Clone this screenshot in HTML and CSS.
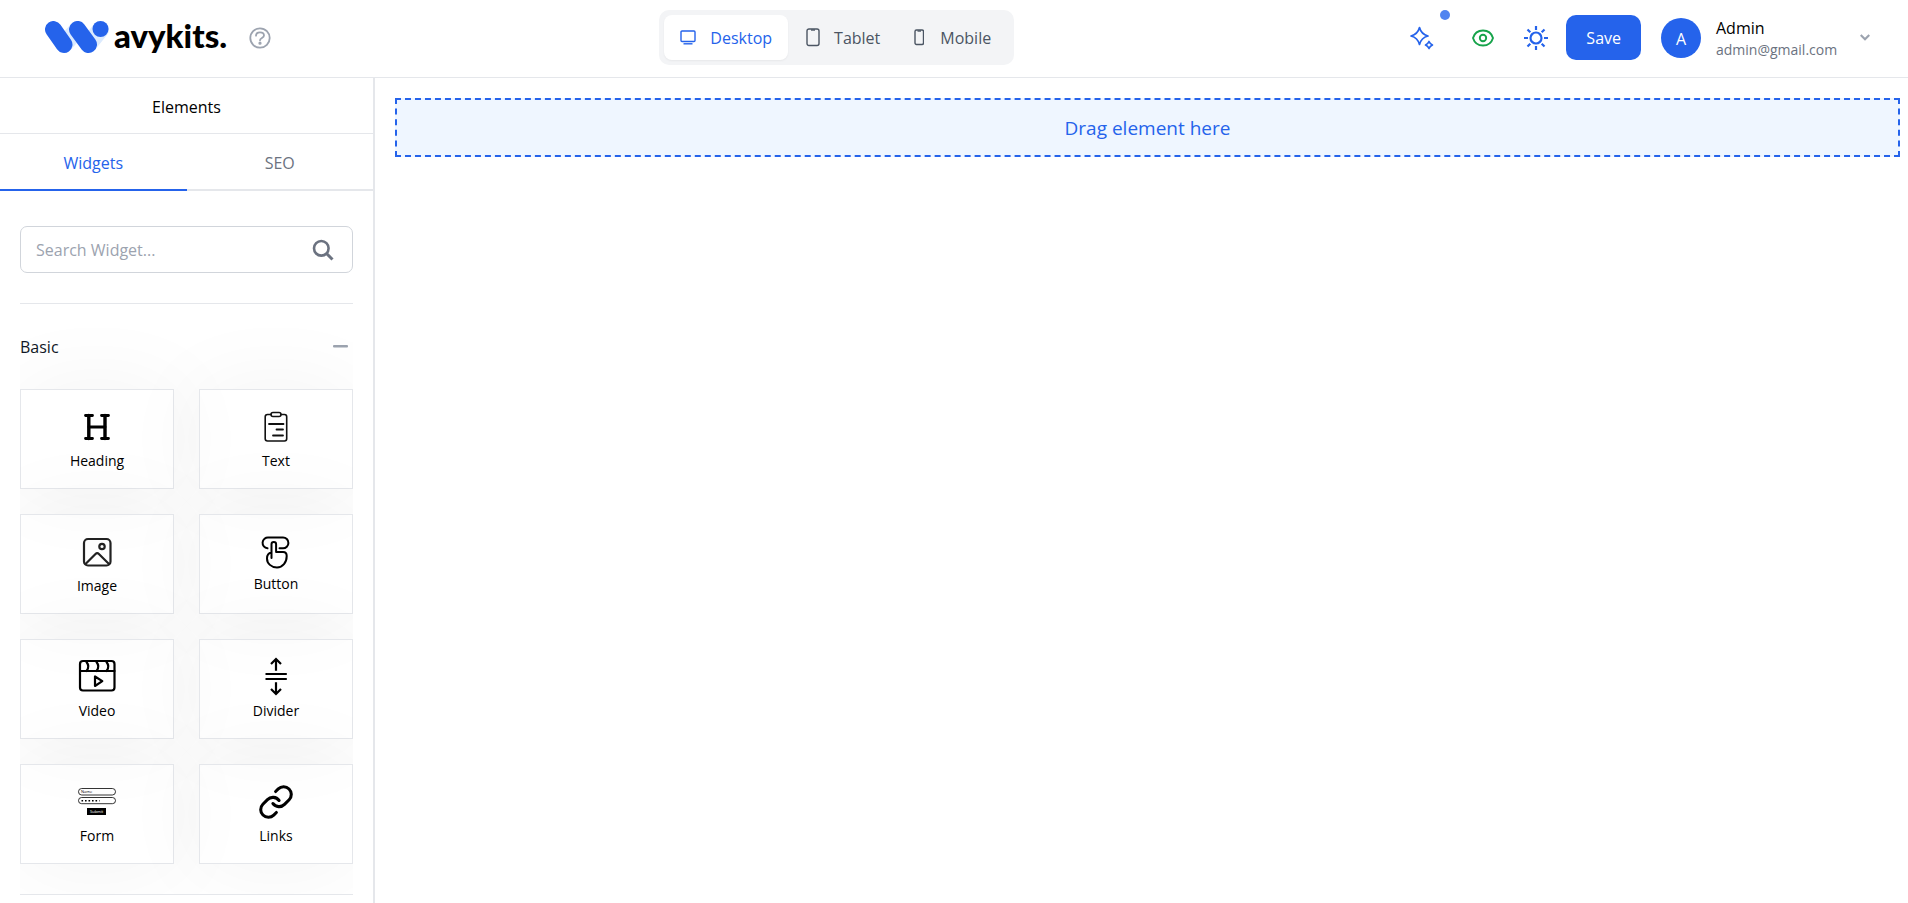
FILE: index.html
```
<!DOCTYPE html>
<html lang="en">
<head>
  <meta charset="UTF-8" />
  <meta name="viewport" content="width=device-width, initial-scale=1.0" />
  <title>Wavykits</title>
  <link rel="stylesheet" href="styles.css">
</head>
<body>
  <header class="header">
    <div class="brand">
      <a class="logo" href="#" aria-label="Wavykits">
        <svg width="64" height="33" viewBox="0 0 64 33" fill="none" stroke-linecap="round" stroke-width="17">
          <path stroke="#dbeafe" d="M19 23.5 32.5 8.5M43.5 23.5 55.5 8.5" />
          <path stroke="#2563eb" d="M8.5 8.5 19 23.5M32.5 8.5 43.5 23.5" />
          <circle cx="55.5" cy="8" r="8" fill="#2563eb" />
        </svg>
        <span class="logo-text">avykits.</span>
      </a>
      <button class="icon-btn help" aria-label="Help">
        <svg width="22" height="22" viewBox="0 0 22 22" fill="none" stroke="currentColor" stroke-width="1.8" stroke-linecap="round">
          <circle cx="11" cy="11" r="9.7" />
          <path d="M7 8.700C7 6.500 8.800 5.300 11 5.300s4 1.300 4 3.300c0 2.400-4 2.400-4 4.600" />
          <circle cx="11" cy="16.2" r=".7" fill="currentColor" />
        </svg>
      </button>
    </div>

    <div class="devices">
      <button class="device active">
        <svg width="16" height="20" viewBox="0 0 16 20" fill="none" stroke="currentColor" stroke-width="1.4">
          <rect x="1" y="3" width="14" height="10.5" rx="1" />
          <path d="M3.500 15.800h9" />
        </svg>
        Desktop
      </button>
      <button class="device">
        <svg width="14" height="20" viewBox="0 0 14 20" fill="none" stroke="currentColor" stroke-width="1.4">
          <rect x="1" y="1" width="12" height="16.5" rx="2" />
          <path d="M5 2h4" />
        </svg>
        Tablet
      </button>
      <button class="device mobile">
        <svg width="10" height="20" viewBox="0 0 10 20" fill="none" stroke="currentColor" stroke-width="1.4">
          <rect x="1" y="2" width="8.5" height="14.5" rx="1.5" />
          <path d="M3.500 3h3.500" />
        </svg>
        Mobile
      </button>
    </div>

    <div class="actions">
      <button class="icon-btn ai" aria-label="AI assistant">
        <svg width="24" height="24" viewBox="0 0 24 24" fill="none" stroke="currentColor" stroke-width="1.7" stroke-linejoin="round">
          <path d="M9.500 1.500Q11.200 8.200 18 10 11.200 11.800 9.500 18.500 7.800 11.800 1 10 7.800 8.200 9.500 1.500z" />
          <path d="M19 15.500q1 2.500 3.500 3.500-2.500 1-3.500 3.500-1-2.500-3.500-3.500 2.500-1 3.500-3.500z" />
        </svg>
        <span class="dot"></span>
      </button>
      <button class="icon-btn preview" aria-label="Preview">
        <svg width="22" height="20" viewBox="0 0 22 20" fill="none" stroke="currentColor" stroke-width="1.9">
          <path d="M1 10C2.500 5 6.500 2.500 11 2.500S19.500 5 21 10c-1.500 5-5.500 7.500-10 7.500S2.500 15 1 10z" />
          <circle cx="11" cy="10" r="3.2" />
        </svg>
      </button>
      <button class="icon-btn theme" aria-label="Toggle theme">
        <svg width="26" height="26" viewBox="0 0 26 26" fill="none" stroke="currentColor" stroke-width="2.2">
          <circle cx="13" cy="13" r="5.5" />
          <path d="M13 1v4M13 21v4M1 13h4M21 13h4M4.500 4.500l2.800 2.800M18.700 18.700l2.800 2.800M4.500 21.500l2.800-2.800M18.700 7.300l2.800-2.800" />
        </svg>
      </button>
      <button class="save">Save</button>
      <button class="user">
        <span class="avatar">A</span>
        <span class="user-info">
          <span class="user-name">Admin</span>
          <span class="user-mail">admin@gmail.com</span>
        </span>
        <svg width="10" height="8" viewBox="0 0 10 8" fill="none" stroke="#9ca3af" stroke-width="2.2">
          <path d="M.7 1 5 5.300 9.300 1" />
        </svg>
      </button>
    </div>
  </header>

  <div class="layout">
    <aside class="sidebar">
      <h2 class="sidebar-title">Elements</h2>
      <div class="tabs">
        <button class="tab active">Widgets</button>
        <button class="tab">SEO</button>
      </div>

      <div class="panel">
        <div class="search">
          <input type="text" id="search" placeholder="Search Widget..." aria-label="Search Widget" />
          <svg width="22" height="22" viewBox="0 0 22 22" fill="none" stroke="#6b7280" stroke-width="2.6">
            <circle cx="9.3" cy="9.3" r="7.3" />
            <path d="M14.500 14.500l6 6" stroke-width="3" />
          </svg>
        </div>

        <section class="group">
          <button class="group-head">
            Basic
            <svg width="16" height="6" viewBox="0 0 16 6"><rect y="1" width="15" height="2.5" rx="1" fill="#9ca3af" /></svg>
          </button>
          <div class="widgets">
            <div class="widget" draggable="true">
              <svg width="40" height="40" viewBox="0 0 40 40" fill="none" stroke="#000" stroke-linecap="round">
                <path stroke-width="3.4" d="M11.800 8.500v23M28 8.500v23" />
                <path stroke-width="2.8" d="M12 20h16M8.500 8.500h7M24.500 8.500h7M8.500 31.500h7M24.500 31.500h7" />
              </svg>
              <span>Heading</span>
            </div>
            <div class="widget" draggable="true">
              <svg width="40" height="40" viewBox="0 0 40 40" fill="none" stroke="#111" stroke-width="1.6" stroke-linecap="round">
                <path d="M15 7.500h-3.500q-2.300 0-2.300 2.300v22q0 2.200 2.300 2.200h17q2.200 0 2.200-2.200v-22q0-2.300-2.200-2.300H25" />
                <rect x="15" y="5.5" width="10" height="4" rx="2" />
                <path stroke-width="1.8" d="M13 17h14.500M20.500 22.500h6.500M17 28.500h10" />
              </svg>
              <span>Text</span>
            </div>
            <div class="widget" draggable="true">
              <svg width="40" height="40" viewBox="0 0 40 40" fill="none" stroke="#222" stroke-width="2.2" stroke-linejoin="round">
                <rect x="7" y="7" width="26.5" height="26.5" rx="4" />
                <circle cx="25" cy="14.5" r="2.7" />
                <path d="M8 32.500l10.500-10.500q1.700-1.700 3.400 0l10.600 10.500" />
              </svg>
              <span>Image</span>
            </div>
            <div class="widget" draggable="true">
              <svg width="36" height="36" viewBox="0 0 36 36" fill="none" stroke="#000" stroke-width="2" stroke-linecap="round" stroke-linejoin="round">
                <path d="M9.500 14.300A5.400 5.400 0 0 1 10.500 3.500H25a5.400 5.400 0 0 1 0 10.800h-3.500" />
                <path d="M13.500 24V10.300a2.300 2.300 0 0 1 4.600 0V18h7q3.600 0 3.600 4c0 6.500-4 11.500-9.700 11.500S9 29.500 9 24.500c0-3.500 1.500-5.500 4.500-6" />
              </svg>
              <span>Button</span>
            </div>
            <div class="widget" draggable="true">
              <svg width="40" height="40" viewBox="0 0 40 40" fill="none" stroke="#000" stroke-width="2.2" stroke-linecap="round" stroke-linejoin="round">
                <rect x="3" y="4" width="34.5" height="29.5" rx="3" />
                <path d="M3 14h34.500M9.500 5q3.600 4.500 0 9M19.500 5q3.600 4.500 0 9M29.500 5q3.600 4.500 0 9M18 19.500v9.500l7.300-4.800z" />
              </svg>
              <span>Video</span>
            </div>
            <div class="widget" draggable="true">
              <svg width="40" height="40" viewBox="0 0 40 40" fill="none" stroke="#000" stroke-width="2.2">
                <path d="M20 13.700V2M15 7l5-5 5 5M9.500 17h21.300M9.500 22h21.300M20 25.300V37M15 32l5 5 5-5" />
              </svg>
              <span>Divider</span>
            </div>
            <div class="widget" draggable="true">
              <svg width="40" height="40" viewBox="0 0 40 40" fill="none" stroke="#000">
                <rect x="1.5" y="6.5" width="37" height="6.5" rx="3.2" stroke-width=".8" />
                <rect x="1.5" y="15.5" width="37" height="6.2" rx="3.1" stroke-width=".8" />
                <path d="M4.500 18.700h18" stroke-width="1.5" stroke-dasharray="1.6 1.9" />
                <rect x="10" y="26" width="19" height="7" fill="#000" stroke="none" />
                <text class="tiny" x="4" y="11" fill="#000" stroke="none">Name</text>
                <text class="tiny" x="13" y="31" fill="#fff" stroke="none">Submit</text>
              </svg>
              <span>Form</span>
            </div>
            <div class="widget" draggable="true">
              <svg width="40" height="40" viewBox="-1 -1 26 26" fill="none" stroke="#000" stroke-width="2" stroke-linecap="round" stroke-linejoin="round">
                <path d="M10 13a5 5 0 0 0 7.540.540l3-3a5 5 0 0 0-7.070-7.070l-1.720 1.710" />
                <path d="M14 11a5 5 0 0 0-7.540-.540l-3 3a5 5 0 0 0 7.070 7.070l1.710-1.710" />
              </svg>
              <span>Links</span>
            </div>
          </div>
        </section>
      </div>
    </aside>

    <main class="canvas">
      <div class="dropzone">Drag element here</div>
    </main>
  </div>
</body>
</html>
```
FILE: styles.css
```
* { box-sizing: border-box; }
body { margin: 0; height: 100vh; display: flex; flex-direction: column; overflow: hidden; font-family: "Segoe UI", "Open Sans", sans-serif; font-size: 16px; line-height: 24px; color: #000; background: #fff; }
button { font: inherit; color: inherit; background: none; border: none; padding: 0; cursor: pointer; }
svg { display: block; flex-shrink: 0; }

/* header */
.header { display: flex; align-items: center; justify-content: space-between; padding: 10px 38px 12px 45px; border-bottom: 1px solid #e5e7eb; }
.brand { display: flex; align-items: center; gap: 22px; }
.logo { display: flex; align-items: center; gap: 5px; color: #000; text-decoration: none; }
.logo-text { padding-bottom: 6px; font-family: Lato, sans-serif; font-size: 33px; font-weight: 900; line-height: 32px; }
.icon-btn { position: relative; display: flex; }
.help { color: #9ca3af; }

.devices { display: flex; gap: 2px; padding: 5px; background: #f3f4f6; border-radius: 10px; }
.device { display: flex; align-items: center; gap: 14px; height: 45px; padding: 0 16px; border-radius: 8px; color: #4b5563; }
.device.mobile { gap: 16px; padding-right: 18px; }
.device.active { background: #fff; color: #2563eb; box-shadow: 0 1px 2px rgba(0, 0, 0, 0.05); }

.actions { display: flex; align-items: center; }
.ai { color: #2563eb; padding-left: 8px; margin-right: 38px; }
.dot { position: absolute; top: -16px; right: -16px; width: 10px; height: 10px; border-radius: 50%; background: #5084f0; }
.preview { color: #16a34a; margin-right: 29px; }
.theme { color: #2563eb; margin-right: 17px; }
.save { height: 45px; padding: 0 20px; margin-right: 20px; border-radius: 10px; background: #2563eb; color: #fff; }
.user { display: flex; align-items: center; text-align: left; }
.avatar { width: 40px; height: 40px; margin-right: 15px; border-radius: 50%; background: #2563eb; color: #fff; line-height: 42px; text-align: center; }
.user-info { display: flex; flex-direction: column; min-width: 124px; margin-right: 20px; }
.user-name { line-height: 24px; }
.user-mail { font-size: 14px; line-height: 20px; color: #6b7280; }

/* sidebar */
.layout { flex: 1; display: flex; min-height: 0; }
.sidebar { width: 375px; flex-shrink: 0; border-right: 2px solid #e5e7eb; overflow: hidden; }
.sidebar-title { margin: 0; padding: 17px 0 14px; border-bottom: 1px solid #e5e7eb; font-size: 16px; font-weight: 400; text-align: center; }
.tabs { display: flex; }
.tab { flex: 1; height: 57px; padding-top: 2px; border-bottom: 2px solid #e5e7eb; color: #6b7280; }
.tab.active { color: #2563eb; border-color: #2563eb; }
.panel { padding: 35px 20px 0; }
.search { display: flex; align-items: center; height: 47px; padding: 0 18px 0 15px; border: 1px solid #d1d5db; border-radius: 7px; }
.search input { flex: 1; min-width: 0; padding: 0; border: none; outline: none; font: inherit; background: none; }
.search input::placeholder { color: #9ca3af; opacity: 1; }
.group { margin-top: 30px; border-top: 1px solid #e5e7eb; border-bottom: 1px solid #e5e7eb; overflow: hidden; }
.group-head { display: flex; align-items: center; justify-content: space-between; width: 100%; padding: 31px 4px 30px 0; color: #111827; }
.widgets { display: grid; grid-template-columns: 1fr 1fr; gap: 25px; padding-bottom: 30px; }
.widget { display: flex; flex-direction: column; align-items: center; justify-content: center; gap: 2px; height: 100px; padding-top: 2px; border: 1px solid #e5e7eb; font-size: 14px; box-shadow: 0 0 90px rgba(0, 0, 0, 0.05); cursor: grab; }
.tiny { font-size: 4px; }

/* canvas */
.canvas { flex: 1; min-width: 0; padding: 20px 8px 20px 20px; }
.dropzone { padding: 16px 0 15px; border: 2px dashed #2563eb; background: #eff6ff; color: #2563eb; font-size: 19px; text-align: center; }
```
